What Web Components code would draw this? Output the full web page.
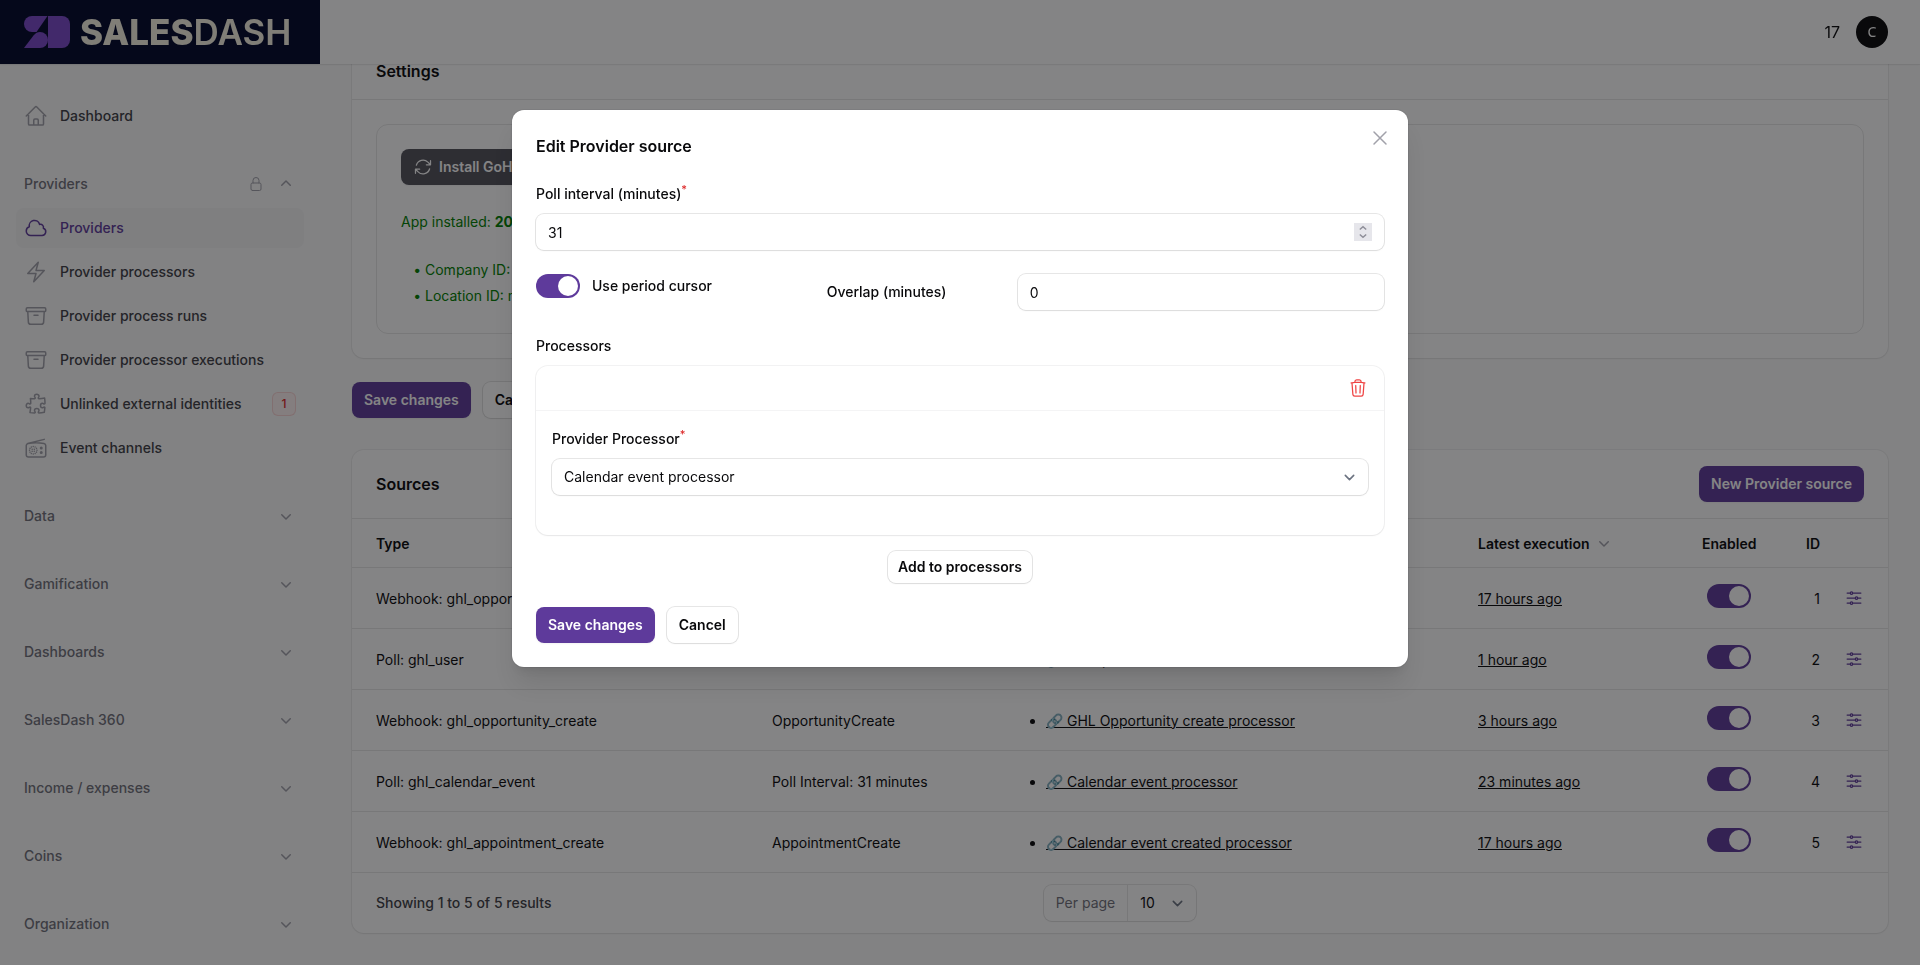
<!DOCTYPE html>
<html lang="en">
<head>
<meta charset="utf-8">
<title>SalesDash</title>
<style>
    * {
        box-sizing: border-box;
    }

    body {
        margin: 0;
        background: #fafafa;
        color: #09090b;
        font-family: Inter, "Noto Sans", sans-serif;
        font-size: 14px;
        line-height: 20px;
        --primary: #5e3a9b;
        --ring: 0 0 0 1px rgba(9, 9, 11, 0.05), 0 1px 2px rgba(0, 0, 0, 0.05);
        --ring-strong: 0 0 0 1px rgba(9, 9, 11, 0.1), 0 1px 2px rgba(0, 0, 0, 0.05);
    }

    .layout {
        display: grid;
        grid-template-columns: 320px minmax(0, 1fr);
        height: 100vh;
        overflow: hidden;
    }

    main {
        display: flex;
        flex-direction: column;
        padding: 43px 32px 32px;
    }

    .actions {
        display: flex;
        gap: 12px;
        margin: 24px 0 32px;
    }

    .connection {
        border: 1px solid rgba(9, 9, 11, 0.1);
        border-radius: 12px;
        padding: 24px;
        color: green;
        line-height: 26px;
    }

    .connection p {
        margin: 24px 0 22px;
    }

    .connection ul {
        margin: 0;
        padding-left: 24px;
    }

    .connection li::marker {
        content: "• ";
    }

    .cursor-row {
        display: grid;
        grid-template-columns: 1fr 1fr 1fr;
        gap: 24px;
    }

    .cursor-row sd-field {
        grid-column: span 2;
    }

    [slot="footer"] {
        display: flex;
        gap: 12px;
    }
</style>
</head>
<body>

<sd-topbar count="17" initial="C"></sd-topbar>

<div class="layout">
    <sd-sidebar>
        <sd-nav-item icon="home">Dashboard</sd-nav-item>
        <sd-nav-group label="Providers" open locked>
            <sd-nav-item icon="cloud" active>Providers</sd-nav-item>
            <sd-nav-item icon="bolt">Provider processors</sd-nav-item>
            <sd-nav-item icon="archive">Provider process runs</sd-nav-item>
            <sd-nav-item icon="archive">Provider processor executions</sd-nav-item>
            <sd-nav-item icon="puzzle" badge="1">Unlinked external identities</sd-nav-item>
            <sd-nav-item icon="radio">Event channels</sd-nav-item>
        </sd-nav-group>
        <sd-nav-group label="Data"></sd-nav-group>
        <sd-nav-group label="Gamification"></sd-nav-group>
        <sd-nav-group label="Dashboards"></sd-nav-group>
        <sd-nav-group label="SalesDash 360"></sd-nav-group>
        <sd-nav-group label="Income / expenses"></sd-nav-group>
        <sd-nav-group label="Coins"></sd-nav-group>
        <sd-nav-group label="Organization"></sd-nav-group>
    </sd-sidebar>

    <main>
        <sd-section heading="Settings">
            <div class="connection">
                <sd-button color="gray" icon="refresh">Install GoHighLevel</sd-button>
                <p>App installed: <b>2025</b></p>
                <ul>
                    <li>Company ID:</li>
                    <li>Location ID: not set</li>
                </ul>
            </div>
        </sd-section>

        <div class="actions">
            <sd-button>Save changes</sd-button>
            <sd-button color="light">Cancel</sd-button>
        </div>

        <sd-sources></sd-sources>
    </main>
</div>

<sd-modal heading="Edit Provider source">
    <sd-field label="Poll interval (minutes)" type="number" value="31" required stepper></sd-field>
    <div class="cursor-row">
        <sd-toggle label="Use period cursor"></sd-toggle>
        <sd-field label="Overlap (minutes)" type="number" value="0" inline></sd-field>
    </div>
    <sd-repeater label="Processors" add-label="Add to processors">
        <sd-field label="Provider Processor" type="select" value="Calendar event processor" required></sd-field>
    </sd-repeater>
    <div slot="footer">
        <sd-button>Save changes</sd-button>
        <sd-button color="light">Cancel</sd-button>
    </div>
</sd-modal>

<script>
const ICONS = {
    home: "m2.25 12 8.954-8.955c.44-.439 1.152-.439 1.591 0L21.75 12M4.5 9.75v10.125c0 .621.504 1.125 1.125 1.125H9.75v-4.875c0-.621.504-1.125 1.125-1.125h2.25c.621 0 1.125.504 1.125 1.125V21h4.125c.621 0 1.125-.504 1.125-1.125V9.75M8.25 21h8.25",
    cloud: "M2.25 15a4.5 4.5 0 0 0 4.5 4.5H18a3.75 3.75 0 0 0 1.332-7.257 3 3 0 0 0-3.758-3.848 5.25 5.25 0 0 0-10.233 2.33A4.502 4.502 0 0 0 2.25 15Z",
    bolt: "m3.75 13.5 10.5-11.25L12 10.5h8.25L9.75 21.75 12 13.5H3.75Z",
    archive: "m20.25 7.5-.625 10.632a2.25 2.25 0 0 1-2.247 2.118H6.622a2.25 2.25 0 0 1-2.247-2.118L3.75 7.5M10 11.25h4M3.375 7.5h17.25c.621 0 1.125-.504 1.125-1.125v-1.5c0-.621-.504-1.125-1.125-1.125H3.375c-.621 0-1.125.504-1.125 1.125v1.5c0 .621.504 1.125 1.125 1.125Z",
    puzzle: "M14.25 6.087c0-.355.186-.676.401-.959.221-.29.349-.634.349-1.003 0-1.036-1.007-1.875-2.25-1.875s-2.25.84-2.25 1.875c0 .369.128.713.349 1.003.215.283.401.604.401.959v0a.64.64 0 0 1-.657.643 48.39 48.39 0 0 1-4.163-.3c.186 1.613.293 3.25.315 4.907a.656.656 0 0 1-.658.663v0c-.355 0-.676-.186-.959-.401a1.647 1.647 0 0 0-1.003-.349c-1.036 0-1.875 1.007-1.875 2.25s.84 2.25 1.875 2.25c.369 0 .713-.128 1.003-.349.283-.215.604-.401.959-.401v0c.31 0 .555.26.532.57a48.039 48.039 0 0 1-.642 5.056c1.518.19 3.058.309 4.616.354a.64.64 0 0 0 .657-.643v0c0-.355-.186-.676-.401-.959a1.647 1.647 0 0 1-.349-1.003c0-1.035 1.008-1.875 2.25-1.875 1.243 0 2.25.84 2.25 1.875 0 .369-.128.713-.349 1.003-.215.283-.4.604-.4.959v0c0 .333.277.599.61.58a48.1 48.1 0 0 0 5.427-.63 48.05 48.05 0 0 0 .582-4.717.532.532 0 0 0-.533-.57v0c-.355 0-.676.186-.959.401-.29.221-.634.349-1.003.349-1.035 0-1.875-1.007-1.875-2.25s.84-2.25 1.875-2.25c.37 0 .713.128 1.003.349.283.215.604.401.96.401v0a.656.656 0 0 0 .658-.663 48.422 48.422 0 0 0-.37-5.36c-1.886.342-3.81.574-5.766.689a.578.578 0 0 1-.61-.58v0Z",
    radio: "m3.75 7.5 16.5-4.125M12 6.75c-2.708 0-5.363.224-7.948.655C2.999 7.58 2.25 8.507 2.25 9.574v9.176A2.25 2.25 0 0 0 4.5 21h15a2.25 2.25 0 0 0 2.25-2.25V9.574c0-1.067-.75-1.994-1.802-2.169A48.329 48.329 0 0 0 12 6.75Zm-1.683 6.443-.005.005-.006-.005.006-.005.005.005Zm-.005 2.127-.005-.006.005-.005.005.005-.005.005Zm-2.116-.006-.005.006-.006-.006.005-.005.006.005Zm-.005-2.116-.006-.005.006-.005.005.005-.005.005ZM9.255 10.5v.008h-.008V10.5h.008Zm3.249 1.88-.007.004-.003-.007.006-.003.004.006Zm-1.38 5.126-.003-.006.006-.004.004.007-.006.003Zm.007-6.501-.003.006-.007-.003.004-.007.006.004Zm1.37 5.129-.007-.004.004-.006.006.003-.004.007Zm.504-1.877h-.008v-.007h.008v.007ZM9.255 18v.008h-.008V18h.008Zm-3.246-1.87-.007.004L6 16.127l.006-.003.004.006Zm1.366-5.119-.004-.006.006-.004.004.007-.006.003ZM7.38 17.5l-.003.006-.007-.003.004-.007.006.004Zm-1.376-5.116L6 12.38l.003-.007.007.004-.004.007Zm-.5 1.873h-.008v-.007h.008v.007ZM17.25 12.75a.75.75 0 1 1 0-1.5.75.75 0 0 1 0 1.5Zm0 4.5a.75.75 0 1 1 0-1.5.75.75 0 0 1 0 1.5Z",
    lock: "M16.5 10.5V6.75a4.5 4.5 0 1 0-9 0v3.75m-.75 11.25h10.5a2.25 2.25 0 0 0 2.25-2.25v-6.75a2.25 2.25 0 0 0-2.25-2.25H6.75a2.25 2.25 0 0 0-2.25 2.25v6.75a2.25 2.25 0 0 0 2.25 2.25Z",
    refresh: "M16.023 9.348h4.992v-.001M2.985 19.644v-4.992m0 0h4.992m-4.993 0 3.181 3.183a8.25 8.25 0 0 0 13.803-3.7M4.031 9.865a8.25 8.25 0 0 1 13.803-3.7l3.181 3.182m0-4.991v4.99",
    close: "M6 18 18 6M6 6l12 12",
    trash: "m14.74 9-.346 9m-4.788 0L9.26 9m9.968-3.21c.342.052.682.107 1.022.166m-1.022-.165L18.16 19.673a2.25 2.25 0 0 1-2.244 2.077H8.084a2.25 2.25 0 0 1-2.244-2.077L4.772 5.79m14.456 0a48.108 48.108 0 0 0-3.478-.397m-12 .562c.34-.059.68-.114 1.022-.165m0 0a48.11 48.11 0 0 1 3.478-.397m7.5 0v-.916c0-1.18-.91-2.164-2.09-2.201a51.964 51.964 0 0 0-3.32 0c-1.18.037-2.09 1.022-2.09 2.201v.916m7.5 0a48.667 48.667 0 0 0-7.5 0",
    sliders: "M10.5 6h9.75M10.5 6a1.5 1.5 0 1 1-3 0m3 0a1.5 1.5 0 1 0-3 0M3.75 6H7.5m3 12h9.75m-9.75 0a1.5 1.5 0 0 1-3 0m3 0a1.5 1.5 0 0 0-3 0m-3.75 0H7.5m9-6h3.75m-3.75 0a1.5 1.5 0 0 1-3 0m3 0a1.5 1.5 0 0 0-3 0m-9.75 0h9.75"
};

// Filled icons on a 20px grid
const MINI_ICONS = {
    down: "M5.22 8.22a.75.75 0 0 1 1.06 0L10 11.94l3.72-3.72a.75.75 0 1 1 1.06 1.06l-4.25 4.25a.75.75 0 0 1-1.06 0L5.22 9.28a.75.75 0 0 1 0-1.06Z",
    up: "M9.47 6.47a.75.75 0 0 1 1.06 0l4.25 4.25a.75.75 0 1 1-1.06 1.06L10 8.06l-3.72 3.72a.75.75 0 0 1-1.06-1.06l4.25-4.25Z"
};

const SELECT_ARROW = `url("data:image/svg+xml,%3csvg xmlns='http://www.w3.org/2000/svg' fill='none' viewBox='0 0 20 20'%3e%3cpath stroke='%236b7280' stroke-linecap='round' stroke-linejoin='round' stroke-width='1.5' d='M6 8l4 4 4-4'/%3e%3c/svg%3e")`;

const STEPPER_ARROWS = `url("data:image/svg+xml,%3csvg xmlns='http://www.w3.org/2000/svg' fill='none' viewBox='0 0 18 18'%3e%3cpath stroke='%238e8e98' stroke-width='1.5' d='M5.800 6.500 9 3.800l3.200 2.700M5.800 11.500 9 14.200l3.200-2.700'/%3e%3c/svg%3e")`;

const BASE = `
    * {
        box-sizing: border-box;
    }

    button, input, select {
        margin: 0;
        padding: 0;
        border: none;
        background: none;
        color: inherit;
        font: inherit;
    }

    button {
        cursor: pointer;
    }

    a {
        color: inherit;
    }
`;

class SdIcon extends HTMLElement {
    constructor() {
        super();
        this.attachShadow({ mode: "open" });
    }

    connectedCallback() {
        const name = this.getAttribute("name");
        const size = this.getAttribute("size") || 20;
        const svg = MINI_ICONS[name]
            ? `<svg viewBox="0 0 20 20" fill="currentColor"><path d="${MINI_ICONS[name]}"/></svg>`
            : `<svg viewBox="0 0 24 24" fill="none" stroke="currentColor" stroke-width="1.5" stroke-linecap="round" stroke-linejoin="round"><path d="${ICONS[name]}"/></svg>`;

        this.shadowRoot.innerHTML = `
            <style>
                :host {
                    display: block;
                    flex: none;
                    width: ${size}px;
                    height: ${size}px;
                }

                svg {
                    display: block;
                    width: 100%;
                    height: 100%;
                }
            </style>
            ${svg}
        `;
    }
}

class SdTopbar extends HTMLElement {
    constructor() {
        super();
        this.attachShadow({ mode: "open" });
    }

    connectedCallback() {
        this.shadowRoot.innerHTML = `
            <style>
                ${BASE}
                :host {
                    position: fixed;
                    inset: 0 0 auto;
                    z-index: 20;
                    display: flex;
                    justify-content: space-between;
                    height: 64px;
                    background: white;
                    box-shadow: var(--ring);
                }

                .brand {
                    display: flex;
                    align-items: center;
                    gap: 10px;
                    width: 320px;
                    padding: 0 24px;
                    background: #00072b;
                    color: #f6f2e2;
                    font-size: 35px;
                    line-height: 40px;
                    font-weight: 600;
                    text-decoration: none;
                }

                .brand b {
                    font-weight: 800;
                }

                .brand svg {
                    flex: none;
                    width: 46px;
                    height: 32px;
                }

                .user {
                    display: flex;
                    align-items: center;
                    gap: 16px;
                    padding-right: 32px;
                    font-size: 16px;
                }

                .avatar {
                    width: 32px;
                    height: 32px;
                    border-radius: 50%;
                    background: #09090b;
                    color: white;
                    font-family: "Noto Sans", sans-serif;
                    font-size: 14px;
                }
            </style>
            <a class="brand" href="#">
                <svg viewBox="0 0 46 32" fill="#7b49cb" aria-hidden="true">
                    <path d="M8 0H23.500L12.500 16H8A8 8 0 0 1 8 0Z"/>
                    <path d="M0 32 9.500 19.500C11.500 17 13.500 16 16 16a8 8 0 0 1 0 16Z"/>
                    <path d="M24 0h14a8 8 0 0 1 8 8v16a8 8 0 0 1-8 8H24Z"/>
                </svg>
                <span><b>SALES</b>DASH</span>
            </a>
            <div class="user">
                <span>${this.getAttribute("count")}</span>
                <button class="avatar">${this.getAttribute("initial")}</button>
            </div>
        `;
    }
}

class SdSidebar extends HTMLElement {
    constructor() {
        super();
        this.attachShadow({ mode: "open" });
    }

    connectedCallback() {
        this.shadowRoot.innerHTML = `
            <style>
                :host {
                    display: block;
                    padding: 96px 16px 32px;
                }

                nav {
                    display: flex;
                    flex-direction: column;
                    gap: 28px;
                }
            </style>
            <nav><slot></slot></nav>
        `;
    }
}

class SdNavGroup extends HTMLElement {
    constructor() {
        super();
        this.attachShadow({ mode: "open" });
    }

    connectedCallback() {
        const open = this.hasAttribute("open");

        this.shadowRoot.innerHTML = `
            <style>
                ${BASE}
                :host {
                    display: flex;
                    flex-direction: column;
                    gap: 4px;
                }

                button {
                    display: flex;
                    align-items: center;
                    gap: 12px;
                    padding: 8px;
                    color: #71717a;
                    font-weight: 500;
                    line-height: 24px;
                    text-align: left;
                }

                span {
                    flex: 1;
                }

                sd-icon {
                    color: #a1a1aa;
                }
            </style>
            <button aria-expanded="${open}">
                <span>${this.getAttribute("label")}</span>
                ${this.hasAttribute("locked") ? `<sd-icon name="lock" size="16"></sd-icon>` : ""}
                <sd-icon name="${open ? "up" : "down"}"></sd-icon>
            </button>
            <slot></slot>
        `;
    }
}

class SdNavItem extends HTMLElement {
    constructor() {
        super();
        this.attachShadow({ mode: "open" });
    }

    connectedCallback() {
        const badge = this.getAttribute("badge");

        this.shadowRoot.innerHTML = `
            <style>
                ${BASE}
                :host {
                    display: block;
                }

                a {
                    display: flex;
                    align-items: center;
                    gap: 12px;
                    padding: 8px;
                    border-radius: 8px;
                    color: #3f3f46;
                    font-weight: 500;
                    line-height: 24px;
                    text-decoration: none;
                }

                sd-icon {
                    color: #a1a1aa;
                }

                :host([active]) a {
                    background: #f4f4f5;
                }

                :host([active]) a,
                :host([active]) sd-icon {
                    color: var(--primary);
                }

                .label {
                    flex: 1;
                }

                .badge {
                    min-width: 24px;
                    border-radius: 6px;
                    background: #fef2f2;
                    box-shadow: inset 0 0 0 1px rgba(220, 38, 38, 0.15);
                    color: #dc2626;
                    font-size: 12px;
                    text-align: center;
                }
            </style>
            <a href="#">
                <sd-icon name="${this.getAttribute("icon")}" size="24"></sd-icon>
                <span class="label"><slot></slot></span>
                ${badge ? `<span class="badge">${badge}</span>` : ""}
            </a>
        `;
    }
}

class SdButton extends HTMLElement {
    constructor() {
        super();
        this.attachShadow({ mode: "open" });
    }

    connectedCallback() {
        const icon = this.getAttribute("icon");

        this.shadowRoot.innerHTML = `
            <style>
                ${BASE}
                :host {
                    display: flex;
                    flex: none;
                }

                button {
                    display: flex;
                    align-items: center;
                    gap: 6px;
                    padding: 8px 12px;
                    border-radius: 8px;
                    background: var(--primary);
                    box-shadow: 0 1px 2px rgba(0, 0, 0, 0.05);
                    color: white;
                    font-weight: 600;
                    line-height: 20px;
                    white-space: nowrap;
                }

                :host([color="gray"]) button {
                    background: #52525b;
                }

                :host([color="light"]) button {
                    background: white;
                    box-shadow: var(--ring-strong);
                    color: #09090b;
                }

                :host([size="sm"]) button {
                    padding: 6px 10px;
                }
            </style>
            <button>
                ${icon ? `<sd-icon name="${icon}"></sd-icon>` : ""}
                <slot></slot>
            </button>
        `;
    }
}

class SdSection extends HTMLElement {
    constructor() {
        super();
        this.attachShadow({ mode: "open" });
    }

    connectedCallback() {
        this.shadowRoot.innerHTML = `
            <style>
                :host {
                    display: block;
                    border-radius: 12px;
                    background: white;
                    box-shadow: var(--ring);
                }

                h2 {
                    margin: 0;
                    padding: 16px 24px;
                    font-size: 16px;
                    line-height: 24px;
                    font-weight: 600;
                }

                div {
                    padding: 24px;
                    border-top: 1px solid rgba(9, 9, 11, 0.1);
                }
            </style>
            <h2>${this.getAttribute("heading")}</h2>
            <div><slot></slot></div>
        `;
    }
}

class SdToggle extends HTMLElement {
    constructor() {
        super();
        this.attachShadow({ mode: "open" });
    }

    connectedCallback() {
        const label = this.getAttribute("label");

        this.shadowRoot.innerHTML = `
            <style>
                ${BASE}
                :host {
                    display: block;
                    line-height: 24px;
                    font-weight: 500;
                }

                label {
                    display: inline-flex;
                    align-items: center;
                    gap: 12px;
                }

                input {
                    appearance: none;
                    display: flex;
                    flex: none;
                    width: 44px;
                    height: 24px;
                    padding: 2px;
                    border-radius: 12px;
                    background: #e4e4e7;
                }

                input::before {
                    content: "";
                    width: 20px;
                    height: 20px;
                    border-radius: 50%;
                    background: white;
                }

                input:checked {
                    justify-content: flex-end;
                    background: var(--primary);
                }
            </style>
            <label>
                <input type="checkbox" role="switch" checked ${label ? "" : `aria-label="Enabled"`}>
                ${label ? `<span>${label}</span>` : ""}
            </label>
        `;
    }
}

class SdField extends HTMLElement {
    constructor() {
        super();
        this.attachShadow({ mode: "open" });
    }

    connectedCallback() {
        const type = this.getAttribute("type");
        const value = this.getAttribute("value");
        const control = type === "select"
            ? `<select id="control"><option>${value}</option></select>`
            : `<input id="control" type="${type}" value="${value}">`;

        this.shadowRoot.innerHTML = `
            <style>
                ${BASE}
                :host {
                    display: grid;
                    gap: 8px;
                }

                :host([inline]) {
                    grid-template-columns: repeat(3, minmax(0, 1fr));
                    gap: 16px;
                }

                label {
                    font-weight: 500;
                    line-height: 24px;
                }

                :host([inline]) label {
                    padding-top: 6px;
                }

                :host([inline]) input {
                    grid-column: span 2;
                }

                sup {
                    color: #dc2626;
                    font-size: 11px;
                    line-height: 0;
                }

                input, select {
                    width: 100%;
                    height: 36px;
                    padding: 0 12px;
                    border-radius: 8px;
                    background-color: white;
                    box-shadow: var(--ring-strong);
                    line-height: 24px;
                }

                select {
                    appearance: none;
                    background-image: ${SELECT_ARROW};
                    background-repeat: no-repeat;
                    background-position: right 8px center;
                    background-size: 21px 21px;
                }

                :host([stepper]) input::-webkit-inner-spin-button {
                    appearance: none;
                    width: 18px;
                    height: 18px;
                    background: #e6e6eb ${STEPPER_ARROWS} center / 18px 18px;
                    opacity: 1;
                }
            </style>
            <label for="control">${this.getAttribute("label")}${this.hasAttribute("required") ? "<sup>*</sup>" : ""}</label>
            ${control}
        `;
    }
}

class SdRepeater extends HTMLElement {
    constructor() {
        super();
        this.attachShadow({ mode: "open" });
    }

    connectedCallback() {
        this.shadowRoot.innerHTML = `
            <style>
                ${BASE}
                :host {
                    display: block;
                }

                h3 {
                    margin: 0 0 8px;
                    font-size: 14px;
                    font-weight: 500;
                    line-height: 24px;
                }

                .item {
                    border-radius: 12px;
                    background: white;
                    box-shadow: var(--ring);
                }

                .head {
                    display: flex;
                    justify-content: flex-end;
                    padding: 12px 16px;
                }

                .head button {
                    color: #ef4444;
                }

                .body {
                    padding: 16px 16px 40px;
                    border-top: 1px solid #f4f4f5;
                }

                .add {
                    display: flex;
                    justify-content: center;
                    margin-top: 16px;
                }
            </style>
            <h3>${this.getAttribute("label")}</h3>
            <div class="item">
                <div class="head">
                    <button aria-label="Delete"><sd-icon name="trash"></sd-icon></button>
                </div>
                <div class="body"><slot></slot></div>
            </div>
            <div class="add">
                <sd-button color="light" size="sm">${this.getAttribute("add-label")}</sd-button>
            </div>
        `;
    }
}

class SdModal extends HTMLElement {
    constructor() {
        super();
        this.attachShadow({ mode: "open" });
    }

    connectedCallback() {
        this.shadowRoot.innerHTML = `
            <style>
                ${BASE}
                :host {
                    position: fixed;
                    inset: 0;
                    z-index: 40;
                    display: grid;
                    grid-template-rows: 1fr auto 3fr;
                    justify-items: center;
                    padding: 16px;
                    background: rgba(9, 9, 11, 0.5);
                }

                .window {
                    position: relative;
                    grid-row: 2;
                    width: 100%;
                    max-width: 896px;
                    padding: 24px;
                    border-radius: 12px;
                    background: white;
                    box-shadow: 0 0 0 1px rgba(9, 9, 11, 0.05), 0 20px 25px -5px rgba(0, 0, 0, 0.1), 0 8px 10px -6px rgba(0, 0, 0, 0.1);
                }

                .close {
                    position: absolute;
                    top: 16px;
                    right: 16px;
                    color: #a1a1aa;
                }

                h2 {
                    margin: 0;
                    font-size: 16px;
                    line-height: 24px;
                    font-weight: 600;
                }

                .content {
                    display: grid;
                    gap: 24px;
                    padding: 24px 0;
                }
            </style>
            <div class="window" role="dialog" aria-modal="true" aria-labelledby="heading">
                <button class="close" aria-label="Close"><sd-icon name="close" size="24"></sd-icon></button>
                <h2 id="heading">${this.getAttribute("heading")}</h2>
                <div class="content"><slot></slot></div>
                <slot name="footer"></slot>
            </div>
        `;

        this.shadowRoot.querySelector(".close").addEventListener("click", () => this.remove());
    }
}

const SOURCES = [
    { id: 1, type: "Webhook: ghl_opportunity_update", trigger: "OpportunityUpdate", processor: "GHL Opportunity processor", latest: "17 hours ago" },
    { id: 2, type: "Poll: ghl_user", trigger: "Poll Interval: 60 minutes", processor: "User processor", latest: "1 hour ago" },
    { id: 3, type: "Webhook: ghl_opportunity_create", trigger: "OpportunityCreate", processor: "GHL Opportunity create processor", latest: "3 hours ago" },
    { id: 4, type: "Poll: ghl_calendar_event", trigger: "Poll Interval: 31 minutes", processor: "Calendar event processor", latest: "23 minutes ago" },
    { id: 5, type: "Webhook: ghl_appointment_create", trigger: "AppointmentCreate", processor: "Calendar event created processor", latest: "17 hours ago" }
];

class SdSources extends HTMLElement {
    constructor() {
        super();
        this.attachShadow({ mode: "open" });
    }

    connectedCallback() {
        const rows = SOURCES.map(source => `
            <tr>
                <td>${source.type}</td>
                <td>${source.trigger}</td>
                <td><ul><li><a href="#">🔗 ${source.processor}</a></li></ul></td>
                <td><a href="#">${source.latest}</a></td>
                <td class="toggle"><sd-toggle></sd-toggle></td>
                <td class="id">${source.id}</td>
                <td class="edit"><button aria-label="Edit"><sd-icon name="sliders"></sd-icon></button></td>
            </tr>
        `).join("");

        this.shadowRoot.innerHTML = `
            <style>
                ${BASE}
                :host {
                    display: block;
                    border-radius: 12px;
                    background: white;
                    box-shadow: var(--ring);
                }

                header {
                    display: flex;
                    align-items: center;
                    justify-content: space-between;
                    padding: 16px 24px;
                }

                h2 {
                    margin: 0;
                    font-size: 16px;
                    line-height: 24px;
                    font-weight: 600;
                }

                table {
                    width: 100%;
                    table-layout: fixed;
                    border-spacing: 0;
                    line-height: 21px;
                }

                th, td {
                    padding: 0 12px;
                    border-top: 1px solid rgba(9, 9, 11, 0.1);
                    text-align: left;
                    white-space: nowrap;
                }

                th {
                    height: 49px;
                    font-weight: 600;
                }

                td {
                    height: 61px;
                }

                th:first-child, td:first-child {
                    padding-left: 24px;
                }

                th:last-child, td:last-child {
                    padding-right: 24px;
                }

                .sort {
                    display: flex;
                    align-items: center;
                    gap: 4px;
                }

                .sort sd-icon {
                    color: #a1a1aa;
                }

                th.toggle {
                    text-align: center;
                }

                td.toggle {
                    padding-top: 16px;
                    text-align: center;
                    vertical-align: top;
                }

                .id {
                    text-align: right;
                }

                .edit button {
                    display: block;
                    color: var(--primary);
                }

                ul {
                    margin: 0;
                    padding-left: 26px;
                }

                footer {
                    display: grid;
                    grid-template-columns: 1fr auto 1fr;
                    align-items: center;
                    padding: 12px 24px;
                    border-top: 1px solid rgba(9, 9, 11, 0.1);
                }

                .summary {
                    color: #3f3f46;
                    font-weight: 500;
                }

                .per-page {
                    display: flex;
                    align-items: center;
                    height: 36px;
                    border-radius: 8px;
                    box-shadow: var(--ring-strong);
                }

                .per-page label {
                    padding: 0 12px;
                    color: #71717a;
                }

                .per-page select {
                    appearance: none;
                    width: 69px;
                    height: 36px;
                    padding: 0 32px 0 12px;
                    border-left: 1px solid rgba(9, 9, 11, 0.1);
                    background: ${SELECT_ARROW} no-repeat right 8px center / 21px 21px;
                }
            </style>
            <header>
                <h2>Sources</h2>
                <sd-button>New Provider source</sd-button>
            </header>
            <table>
                <colgroup>
                    <col style="width: 408px">
                    <col style="width: 248px">
                    <col>
                    <col style="width: 224px">
                    <col style="width: 78px">
                    <col style="width: 64px">
                    <col style="width: 56px">
                </colgroup>
                <thead>
                    <tr>
                        <th>Type</th>
                        <th>Trigger</th>
                        <th>Processors</th>
                        <th><span class="sort">Latest execution <sd-icon name="down"></sd-icon></span></th>
                        <th class="toggle">Enabled</th>
                        <th class="id">ID</th>
                        <th></th>
                    </tr>
                </thead>
                <tbody>${rows}</tbody>
            </table>
            <footer>
                <span class="summary">Showing 1 to 5 of 5 results</span>
                <div class="per-page">
                    <label for="per-page">Per page</label>
                    <select id="per-page"><option>10</option></select>
                </div>
            </footer>
        `;
    }
}

customElements.define("sd-icon", SdIcon);
customElements.define("sd-topbar", SdTopbar);
customElements.define("sd-sidebar", SdSidebar);
customElements.define("sd-nav-group", SdNavGroup);
customElements.define("sd-nav-item", SdNavItem);
customElements.define("sd-button", SdButton);
customElements.define("sd-section", SdSection);
customElements.define("sd-toggle", SdToggle);
customElements.define("sd-field", SdField);
customElements.define("sd-repeater", SdRepeater);
customElements.define("sd-modal", SdModal);
customElements.define("sd-sources", SdSources);
</script>
</body>
</html>
